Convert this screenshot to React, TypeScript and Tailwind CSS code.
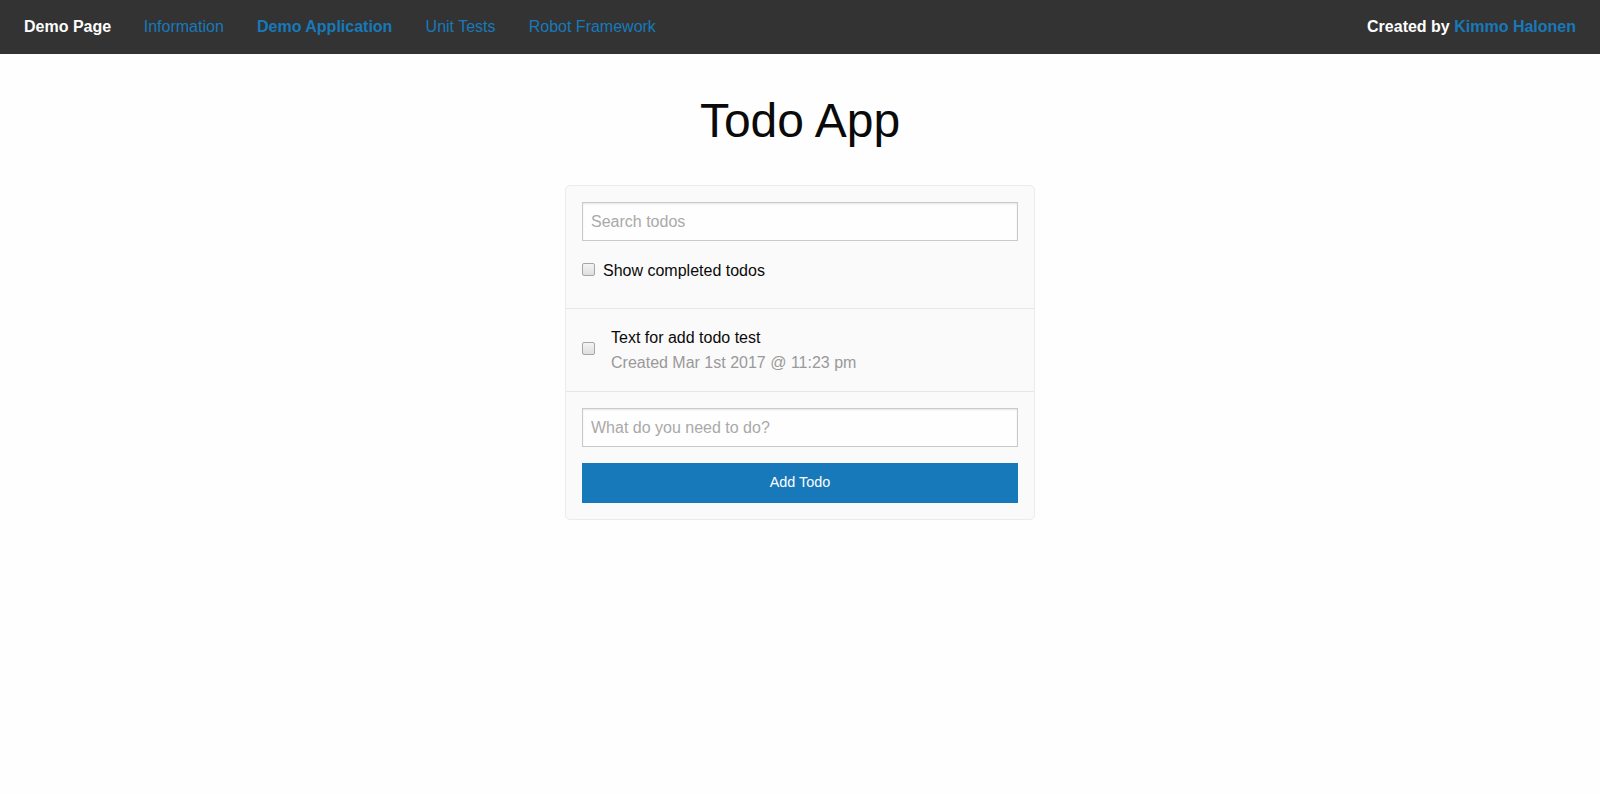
import { useState } from 'react';

interface Todo {
  id: number;
  text: string;
  createdAt: string;
  completed: boolean;
}

const font = { fontFamily: '"Liberation Sans", Arial, Helvetica, sans-serif' };

function Checkbox({ checked, onChange }: { checked: boolean; onChange: () => void }) {
  return (
    <input
      type="checkbox"
      checked={checked}
      onChange={onChange}
      className="h-[13px] w-[13px] shrink-0 cursor-pointer appearance-none rounded-[2px] border border-[#a6a6a6] bg-gradient-to-b from-[#f4f4f4] to-[#dedede] checked:from-[#1779ba] checked:to-[#1779ba]"
    />
  );
}

function TopBar() {
  const linkStyle = 'block px-[16.6px] py-[11px] leading-4 text-[#1779ba] hover:opacity-80';

  return (
    <nav className="flex items-center justify-between bg-[#333333] px-2 py-2 text-base">
      <ul className="flex items-center">
        <li className="px-4 py-[11px] font-bold leading-4 text-[#fefefe]">Demo Page</li>
        <li>
          <a href="#" className={linkStyle}>Information</a>
        </li>
        <li>
          <a href="#" className={`${linkStyle} font-bold`}>Demo Application</a>
        </li>
        <li>
          <a href="#" className={linkStyle}>Unit Tests</a>
        </li>
        <li>
          <a href="#" className={linkStyle}>Robot Framework</a>
        </li>
      </ul>
      <div className="px-4 py-[11px] font-bold leading-4 text-[#fefefe]">
        Created by{' '}
        <a href="#" className="text-[#1779ba]">Kimmo Halonen</a>
      </div>
    </nav>
  );
}

export default function App() {
  const [search, setSearch] = useState('');
  const [showCompleted, setShowCompleted] = useState(false);
  const [newText, setNewText] = useState('');
  const [todos, setTodos] = useState<Todo[]>([
    {
      id: 1,
      text: 'Text for add todo test',
      createdAt: 'Created Mar 1st 2017 @ 11:23 pm',
      completed: false
    }
  ]);

  const visible = todos.filter(
    (t) =>
      (showCompleted || !t.completed) &&
      t.text.toLowerCase().includes(search.toLowerCase())
  );

  const toggle = (id: number) => {
    setTodos(todos.map((t) => (t.id === id ? { ...t, completed: !t.completed } : t)));
  };

  const addTodo = () => {
    if (!newText.trim()) return;
    setTodos([
      ...todos,
      { id: Date.now(), text: newText, createdAt: 'Created just now', completed: false }
    ]);
    setNewText('');
  };

  const inputStyle =
    'block h-[39px] w-full border border-[#cacaca] bg-[#fefefe] px-2 text-base text-[#0a0a0a] shadow-[inset_0_1px_2px_rgba(10,10,10,0.1)] outline-none placeholder:text-[#a9a9a9]';

  return (
    <div className="min-h-[794px] bg-[#fefefe] text-[#0a0a0a]" style={font}>
      <TopBar />

      <h1 className="mt-[38px] mb-[35px] text-center text-[48px] font-normal leading-[58px]">
        Todo App
      </h1>

      <div className="mx-auto w-[470px] rounded-[5px] border border-[#ebebeb] bg-[#fafafa]">
        <div className="border-b border-[#e6e6e6] p-4">
          <input
            className={inputStyle}
            placeholder="Search todos"
            value={search}
            onChange={(e) => setSearch(e.target.value)}
          />
          <div className="mt-4 flex h-[35px] items-start">
            <div className="mt-[6px] flex">
              <Checkbox checked={showCompleted} onChange={() => setShowCompleted(!showCompleted)} />
            </div>
            <label className="mt-[2px] ml-2 text-base leading-6">Show completed todos</label>
          </div>
        </div>

        {visible.map((todo) => (
          <div key={todo.id} className="flex items-center border-b border-[#e6e6e6] p-4">
            <div className="mr-4 -mt-[4px] flex">
              <Checkbox checked={todo.completed} onChange={() => toggle(todo.id)} />
            </div>
            <div>
              <p className="text-base leading-[25px]">{todo.text}</p>
              <p className="text-base leading-[25px] text-[#999999]">{todo.createdAt}</p>
            </div>
          </div>
        ))}

        <div className="p-4">
          <input
            className={inputStyle}
            placeholder="What do you need to do?"
            value={newText}
            onChange={(e) => setNewText(e.target.value)}
          />
          <button
            onClick={addTodo}
            className="mt-4 block h-10 w-full cursor-pointer bg-[#1779ba] text-[14.4px] text-[#fefefe] hover:bg-[#14679e]"
          >
            Add Todo
          </button>
        </div>
      </div>
    </div>
  );
}
